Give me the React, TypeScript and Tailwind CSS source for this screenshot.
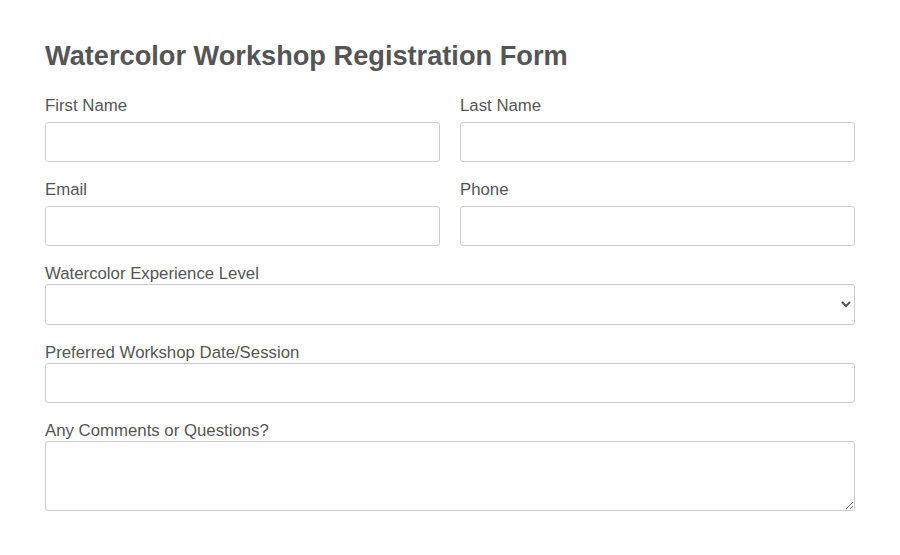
import React from "react";

const labelCls = "block text-[16.8px] leading-[19px] text-[#555]";
const inputCls =
  "block w-full h-[40px] rounded-[3px] border border-[#ccc] bg-white px-2 text-[16px] outline-none";

function Field({ label, type = "text" }: { label: string; type?: string }) {
  return (
    <div>
      <label className={`${labelCls} mb-[7px]`}>{label}</label>
      <input type={type} className={inputCls} />
    </div>
  );
}

export default function App() {
  return (
    <div
      className="min-h-screen bg-white px-[45px] pt-[40px]"
      style={{ fontFamily: '"Liberation Sans", Arial, sans-serif' }}
    >
      <h1 className="text-[27.2px] leading-[32px] font-bold text-[#555]">
        Watercolor Workshop Registration Form
      </h1>

      <form className="mt-[24px] flex flex-col gap-[18px]">
        <div className="grid grid-cols-2 gap-x-[20px] gap-y-[18px]">
          <Field label="First Name" />
          <Field label="Last Name" />
          <Field label="Email" type="email" />
          <Field label="Phone" type="tel" />
        </div>

        <div>
          <label className={`${labelCls} mb-[1px]`}>Watercolor Experience Level</label>
          <select className="block w-full h-[41px] rounded-[3px] border border-[#ccc] bg-white px-2 text-[16px] text-[#555] outline-none">
            <option value=""></option>
            <option>Beginner</option>
            <option>Intermediate</option>
            <option>Advanced</option>
          </select>
        </div>

        <div>
          <label className={`${labelCls} mb-[1px]`}>Preferred Workshop Date/Session</label>
          <input type="text" className={inputCls} />
        </div>

        <div>
          <label className={`${labelCls} mb-[1px]`}>Any Comments or Questions?</label>
          <textarea className="block w-full h-[70px] rounded-[3px] border border-[#ccc] bg-white px-2 text-[16px] outline-none" />
        </div>
      </form>
    </div>
  );
}
